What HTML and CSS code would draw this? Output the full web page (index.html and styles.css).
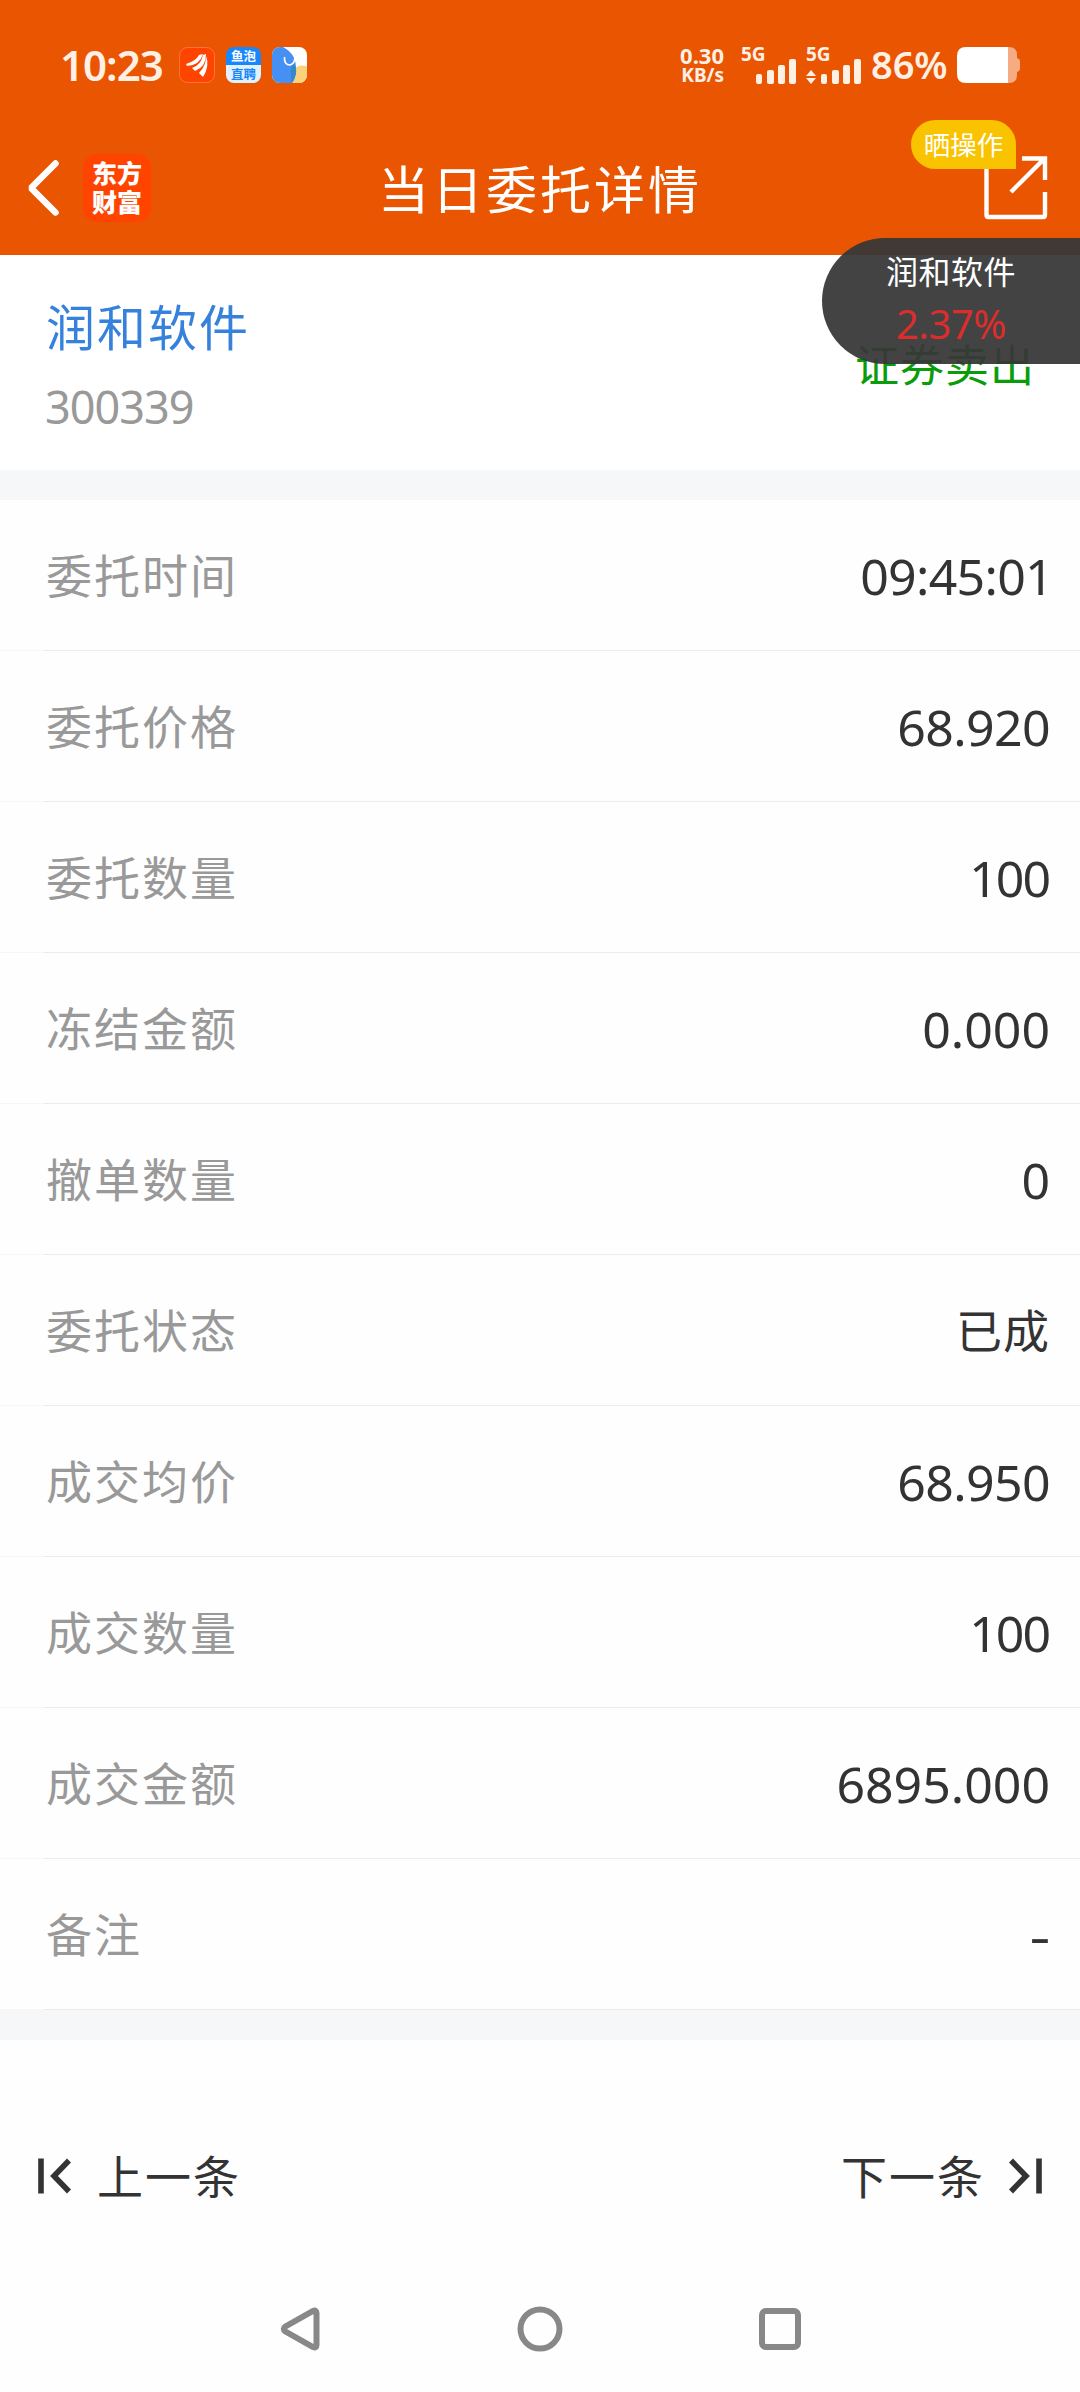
FILE: index.html
```html
<!DOCTYPE html>
<html lang="zh-CN">
<head>
    <meta charset="UTF-8">
    <meta name="viewport" content="width=device-width, initial-scale=1.0">
    <title>当日委托详情</title>
    <link rel="stylesheet" href="styles.css">
</head>
<body>
    <div class="status-bar">
        <span class="clock">10:23</span>
        <div class="app-icons">
            <svg width="36" height="36" viewBox="0 0 36 36">
                <rect x="0.5" y="0.5" width="35" height="35" rx="8" fill="#ff4400" stroke="#ff7440"/>
                <path d="M7 17 Q17 14 20 8 L24 7 Q21 18 8 19Z" fill="#fff"/>
                <path d="M13 21 Q22 18 24 8 L27 7 Q27 20 16 24Z" fill="#fff"/>
                <path d="M20 26 Q27 19 27 9 Q31 19 24 30Z" fill="#fff"/>
            </svg>
            <div class="yupao">
                <span>鱼泡</span>
                <span>直聘</span>
            </div>
            <svg width="36" height="36" viewBox="0 0 36 36">
                <defs><clipPath id="round"><rect width="35" height="36" rx="8"/></clipPath></defs>
                <g clip-path="url(#round)">
                    <rect width="36" height="36" fill="#fff"/>
                    <path d="M22 22 Q28 16 36 20 V36 H18Z" fill="#fbd27c"/>
                    <path d="M0 0 H11 Q25 7 24 24 Q23 32 20 36 H0Z" fill="#4590f2"/>
                    <path d="M21 15 Q25 21 24 27 Q23 32 20 36 Q17 25 21 15Z" fill="#3687cf"/>
                    <path d="M12.500 10 Q12 18 18 18 Q23 17 23 9" fill="none" stroke="#fff" stroke-width="1.600"/>
                </g>
            </svg>
        </div>
        <div class="net-speed">
            <span>0.30</span>
            <span class="unit">KB/s</span>
        </div>
        <svg class="signal" width="56" height="38" viewBox="0 0 56 38">
            <text x="0" y="15">5G</text>
            <rect x="15" y="28" width="6" height="10" rx="2"/>
            <rect x="26" y="24" width="7" height="14" rx="2"/>
            <rect x="37" y="19" width="7" height="19" rx="2"/>
            <rect x="48" y="13" width="7" height="25" rx="2"/>
        </svg>
        <svg class="signal" width="56" height="38" viewBox="0 0 56 38">
            <text x="0" y="15">5G</text>
            <path d="M5 24 L10 30 H0Z M0 32 H10 L5 38Z"/>
            <rect x="15" y="28" width="6" height="10" rx="2"/>
            <rect x="26" y="24" width="7" height="14" rx="2"/>
            <rect x="37" y="19" width="7" height="19" rx="2"/>
            <rect x="48" y="13" width="7" height="25" rx="2"/>
        </svg>
        <span class="percent">86%</span>
        <svg class="battery" width="63" height="36" viewBox="0 0 63 36">
            <path d="M50 0 h2 q8 0 8 8 v3 q3 1 3 3 v8 q0 2 -3 3 v3 q0 8 -8 8 h-2Z" fill="#f6ab83"/>
            <path d="M51 0 H9 Q0 0 0 9 V27 Q0 36 9 36 H51Z" fill="#fff"/>
        </svg>
    </div>

    <div class="header">
        <div class="header-left">
            <svg width="34" height="58" viewBox="0 0 34 58">
                <path d="M29.500 4.500 L5 29 L29.500 53.500" fill="none" stroke="#fff" stroke-width="6.500" stroke-linejoin="bevel" stroke-linecap="round"/>
            </svg>
            <div class="logo">
                <span>东方</span>
                <span>财富</span>
            </div>
        </div>
        <h1>当日委托详情</h1>
        <div class="share">
            <svg width="64" height="64" viewBox="0 0 64 64">
                <path d="M38 2.500 H61 V24 M61 36 V59 Q61 61 59 61 H4.500 Q2.500 61 2.500 59 V3 H20 M60 3 L27 36" fill="none" stroke="#fff" stroke-width="4.400"/>
            </svg>
            <span class="share-badge">晒操作</span>
        </div>
    </div>

    <div class="stock">
        <div>
            <div class="stock-name">润和软件</div>
            <div class="stock-code">300339</div>
        </div>
        <div class="direction">证券卖出</div>
    </div>

    <ul class="detail-list">
        <li><span class="label">委托时间</span><span class="value time">09:45:01</span></li>
        <li><span class="label">委托价格</span><span class="value price">68.920</span></li>
        <li><span class="label">委托数量</span><span class="value count">100</span></li>
        <li><span class="label">冻结金额</span><span class="value">0.000</span></li>
        <li><span class="label">撤单数量</span><span class="value">0</span></li>
        <li><span class="label">委托状态</span><span class="value text">已成</span></li>
        <li><span class="label">成交均价</span><span class="value price">68.950</span></li>
        <li><span class="label">成交数量</span><span class="value count">100</span></li>
        <li><span class="label">成交金额</span><span class="value">6895.000</span></li>
        <li><span class="label">备注</span><span class="value empty">-</span></li>
    </ul>

    <div class="pager">
        <div class="pager-btn">
            <svg width="34" height="36" viewBox="0 0 34 36">
                <path d="M3 0.500 V35.500 M31 2.500 L16 18 L31 33.500" fill="none" stroke="#333" stroke-width="5.600"/>
            </svg>
            <span>上一条</span>
        </div>
        <div class="pager-btn next">
            <span>下一条</span>
            <svg width="34" height="36" viewBox="0 0 34 36">
                <path d="M31 0.500 V35.500 M3 2.500 L18 18 L3 33.500" fill="none" stroke="#333" stroke-width="5.600"/>
            </svg>
        </div>
    </div>

    <div class="nav-bar">
        <svg width="46" height="46" viewBox="0 0 46 46">
            <path d="M35 5 Q38.500 3.500 38.500 7 V39 Q38.500 42.500 35 41 L7.500 25.500 Q4 23 7.500 20.500Z" transform="translate(1 0)" fill="none" stroke="#888" stroke-width="6"/>
        </svg>
        <svg width="46" height="46" viewBox="0 0 46 46">
            <circle cx="23" cy="23" r="19.500" fill="none" stroke="#888" stroke-width="6"/>
        </svg>
        <svg width="46" height="46" viewBox="0 0 46 46">
            <rect x="5" y="5" width="36" height="36" rx="4" fill="none" stroke="#888" stroke-width="6"/>
        </svg>
    </div>

    <!-- floating quote -->
    <div class="float-quote">
        <span class="float-name">润和软件</span>
        <span class="float-change">2.37%</span>
    </div>
</body>
</html>
```

FILE: styles.css
```css
* {
    box-sizing: border-box;
}
body {
    margin: 0;
    font-family: "Noto Sans", "Noto Sans CJK SC", sans-serif;
    background-color: #fefefe;
    color: #333;
}
svg {
    display: block;
    flex-shrink: 0;
}
.status-bar {
    display: flex;
    align-items: center;
    height: 130px;
    padding: 0 60px;
    background-color: #ea5502;
    color: #fff0e6;
    white-space: nowrap;
}
.clock {
    width: 119px;
    padding-bottom: 2px;
    font-size: 42px;
    font-weight: 600;
    letter-spacing: -1px;
}
.app-icons {
    display: flex;
    gap: 11px;
    margin-right: auto;
}
.yupao {
    display: flex;
    flex-direction: column;
    width: 35px;
    height: 36px;
    border-radius: 8px;
    overflow: hidden;
    background: linear-gradient(#1787fb 50%, #e2f1ff 50%);
    font: bold 12.500px/18px "Noto Sans CJK SC", sans-serif;
    text-align: center;
    color: #fff;
}
.yupao span + span {
    color: #1787fb;
}
.net-speed {
    display: flex;
    flex-direction: column;
    align-items: flex-end;
    margin-right: 17px;
    padding-bottom: 1px;
    font-size: 22px;
    line-height: 20px;
    font-weight: 700;
}
.net-speed .unit {
    font-size: 19px;
    line-height: 20px;
}
.signal {
    margin-right: 9px;
    overflow: visible;
    fill: #fff0e6;
    font-size: 19px;
    font-weight: 700;
}
.percent {
    width: 86px;
    padding-bottom: 2px;
    font-size: 38px;
    font-weight: 600;
    letter-spacing: -0.100px;
}
.header {
    display: grid;
    grid-template-columns: 1fr auto 1fr;
    align-items: center;
    height: 125px;
    padding: 0 32px 9px 26px;
    background-color: #ea5502;
}
.header-left {
    display: flex;
    align-items: center;
    gap: 23px;
}
.logo {
    display: flex;
    flex-direction: column;
    width: 68px;
    height: 68px;
    padding-top: 4px;
    border-radius: 14px;
    background-color: #ff4400;
    font: 900 25px/29px "Noto Sans CJK SC", sans-serif;
    text-align: center;
    color: #fff;
}
h1 {
    margin: 0;
    padding: 2px 0 0 6px;
    font-size: 51px;
    line-height: 70px;
    font-weight: 400;
    letter-spacing: 3px;
    color: #fff;
}
.share {
    position: relative;
    justify-self: end;
}
.share-badge {
    position: absolute;
    right: 32px;
    bottom: 51px;
    width: 105px;
    height: 49px;
    border-radius: 25px 25px 0 25px;
    background-color: #f9c300;
    font-size: 26.500px;
    line-height: 51px;
    text-align: center;
    color: #fff;
}
.stock {
    display: flex;
    justify-content: space-between;
    height: 215px;
    padding: 37px 45px 0 46px;
    background-color: #fff;
}
.stock-name {
    font-size: 49px;
    line-height: 70px;
    letter-spacing: 2px;
    color: #3681dc;
}
.stock-code {
    margin: 15px 0 0 -1px;
    font-size: 45px;
    line-height: 60px;
    letter-spacing: -1px;
    color: #999;
}
.direction {
    padding-top: 43px;
    font-size: 44px;
    line-height: 60px;
    letter-spacing: 1px;
    color: #0a9c0a;
}
.detail-list {
    margin: 0;
    padding: 0;
    list-style-type: none;
    border-top: 30px solid #f6f7f9;
    border-bottom: 30px solid #f6f7f9;
}
.detail-list li {
    display: flex;
    justify-content: space-between;
    align-items: center;
    height: 151px;
    padding: 0 30px 0 46px;
    border-bottom: 1px solid;
    border-image: linear-gradient(to right, #f7f7f7 45px, #ebebeb 45px) 1;
}
.label {
    font-size: 46px;
    line-height: 68px;
    letter-spacing: 2px;
    color: #999;
}
.value {
    padding-top: 2px;
    font-size: 50px;
    line-height: 68px;
}
.value.time {
    letter-spacing: -0.700px;
    margin-right: -3px;
}
.value.price {
    letter-spacing: -0.600px;
}
.value.count {
    letter-spacing: -2px;
    margin-right: 1px;
}
.value.text {
    padding-top: 0;
    font-size: 46px;
    letter-spacing: 1px;
}
.value.empty {
    transform: translateX(-2px) scaleX(1.300);
}
.pager {
    display: flex;
    justify-content: space-between;
    align-items: center;
    height: 225px;
    padding: 46px 38px 0 38px;
}
.pager-btn {
    display: flex;
    align-items: center;
    gap: 25px;
    font-size: 46px;
    line-height: 68px;
    letter-spacing: 2px;
}
.pager-btn.next {
    gap: 23px;
}
.nav-bar {
    display: flex;
    justify-content: center;
    gap: 194px;
    padding-top: 41px;
}
.float-quote {
    position: absolute;
    top: 238px;
    right: 0;
    display: flex;
    flex-direction: column;
    align-items: center;
    width: 258px;
    height: 126px;
    padding: 10px 0 0 0;
    border-radius: 63px 0 0 63px;
    background-color: rgba(55, 55, 55, 0.94);
}
.float-name {
    font-size: 32px;
    line-height: 48px;
    letter-spacing: 0.500px;
    color: #fff;
}
.float-change {
    font-size: 40px;
    line-height: 56px;
    letter-spacing: -0.500px;
    color: #dc2d2d;
}
```
